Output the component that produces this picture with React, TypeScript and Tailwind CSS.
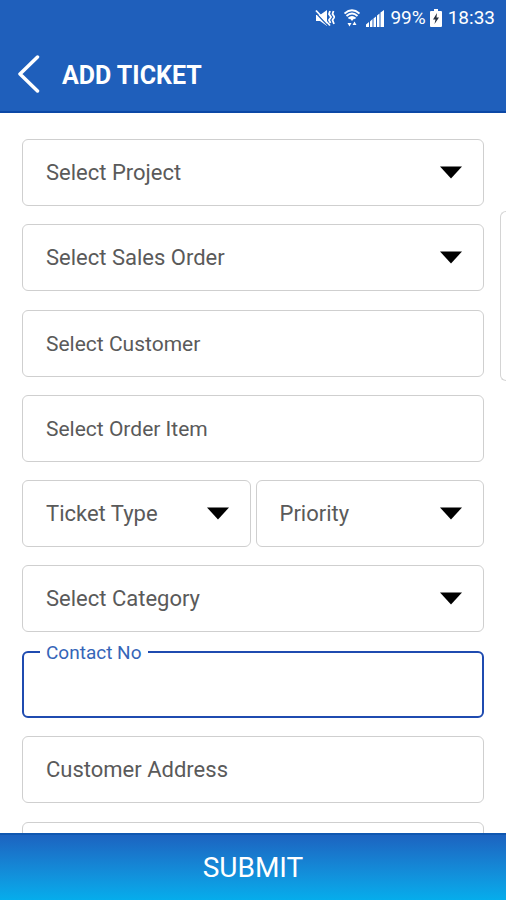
import { useState } from "react";

const fieldBox =
  "h-[67px] w-full rounded-md border border-[#cfcfcf] bg-white pl-[23px] leading-7 text-[#5a5a5a] outline-none";

function SelectField({ label }: { label: string }) {
  return (
    <div className="relative min-w-0 flex-1">
      <select aria-label={label} className={`${fieldBox} block appearance-none pr-14 text-[22px]`} defaultValue="">
        <option value="">{label}</option>
      </select>
      <svg
        viewBox="0 0 22 13"
        className="pointer-events-none absolute top-[27px] right-[22px] h-[13px] w-[22px]"
        aria-hidden="true"
      >
        <path d="M0 0.5H22L11 12.5Z" fill="#000" />
      </svg>
    </div>
  );
}

function TextField({ label, size = "text-[22px]" }: { label: string; size?: string }) {
  return (
    <input
      type="text"
      aria-label={label}
      placeholder={label}
      className={`${fieldBox} ${size} block pr-5 placeholder:text-[#5a5a5a] placeholder:opacity-100`}
    />
  );
}

function StatusBar() {
  return (
    <div className="flex h-9 items-center justify-end pr-[11px] text-[19px] leading-6 text-white">
      <svg viewBox="0 0 20 18" className="mr-[9px] h-[18px] w-5" aria-hidden="true">
        <path d="M1 6H5L12 1V17L5 12H1Z" fill="#fff" />
        <path d="M0 3L14 18" stroke="#1f5fbb" strokeWidth="1.2" />
        <path d="M1 1.500L15 16.500" stroke="#fff" strokeWidth="1.800" />
        <path d="M15 2L14 5L16 8L14 11L15.500 14M18.500 2L17.500 5L19.500 8L17.500 11L19 15" stroke="#fff" strokeWidth="1.800" fill="none" />
      </svg>
      <svg viewBox="0 0 16 18" className="mr-[6px] h-[18px] w-4" fill="none" stroke="#fff" strokeWidth="1.900" aria-hidden="true">
        <path d="M0.500 4.500Q8 -2 15.500 4.500M2.500 7Q8 2 13.500 7M4.500 9.500Q8 6.500 11.500 9.500" />
        <path d="M5.500 9L8 12L10.500 9Z" fill="#fff" stroke="none" />
        <path d="M3.500 14H7.500L5.500 17.500ZM8.500 16L10.500 12.500L12.500 16Z" fill="#fff" stroke="none" />
      </svg>
      <svg viewBox="0 0 18 17" className="mr-[6px] h-[17px] w-[18px]" fill="#fff" aria-hidden="true">
        <path d="M0 17V14.500L3 12V17ZM4 17V11.500L6.500 9V17ZM7.500 17V8.500L10 6.500V17ZM11 17V5.500L13.500 3.500V17ZM14.500 17V2.500L18 0V17Z" />
      </svg>
      <span>99%</span>
      <svg viewBox="0 0 12 18" className="mr-[6px] ml-1 h-[18px] w-3" aria-hidden="true">
        <path d="M4 0H8V2H11Q12 2 12 3V17Q12 18 11 18H1Q0 18 0 17V3Q0 2 1 2H4Z" fill="#fff" />
        <path d="M7 4L3 10.500H5.500L4.500 15L9 8.500H6.500Z" fill="#26303f" />
      </svg>
      <span>18:33</span>
    </div>
  );
}

export default function App() {
  const [contact, setContact] = useState("");

  return (
    <div className="relative flex h-screen flex-col overflow-hidden bg-white font-['Roboto',sans-serif]">
      <header className="shrink-0 border-b-2 border-[#0c48a6] bg-[#1f5fbb]">
        <StatusBar />
        <div className="flex h-[75px] items-center pl-[18px] text-white">
          <button type="button" aria-label="Back" className="mr-[22px]">
            <svg viewBox="0 0 22 38" className="block h-[38px] w-[22px]" aria-hidden="true">
              <path d="M19.500 2L2 19L19.500 36" fill="none" stroke="#fff" strokeWidth="3.500" strokeLinecap="round" strokeLinejoin="round" />
            </svg>
          </button>
          <h1 className="pt-1 text-[25px] leading-8 font-bold">ADD TICKET</h1>
        </div>
      </header>

      <main className="min-h-0 flex-1 overflow-y-auto pt-[26px] [scrollbar-width:none]">
        <form id="ticket" className="flex flex-col gap-[19px] px-[22px]" onSubmit={(e) => e.preventDefault()}>
          <div className="flex flex-col gap-[18px]">
            <SelectField label="Select Project" />
            <SelectField label="Select Sales Order" />
          </div>

          <div className="flex flex-col gap-[18px]">
            <TextField label="Select Customer" size="text-[21px]" />
            <TextField label="Select Order Item" size="text-[21px]" />
            <div className="flex gap-[5px]">
              <SelectField label="Ticket Type" />
              <SelectField label="Priority" />
            </div>
            <SelectField label="Select Category" />
          </div>

          <div className="flex flex-col gap-[18px]">
            <div className="relative">
              <input
                id="contact"
                type="tel"
                value={contact}
                onChange={(e) => setContact(e.target.value)}
                className="block h-[67px] w-full rounded-md border-2 border-[#1f4bb0] bg-white px-5 text-[22px] text-[#5a5a5a] outline-none"
              />
              <label
                htmlFor="contact"
                className="absolute -top-2 left-[18px] bg-white px-[6px] text-[19px] leading-5 text-[#3565b8]"
              >
                Contact No
              </label>
            </div>
            <TextField label="Customer Address" />
          </div>

          <input type="text" aria-label="Remarks" className={`${fieldBox} block pr-5 text-[22px]`} />
        </form>
      </main>

      <div className="absolute top-[211px] right-0 h-[170px] w-[6px] rounded-l-md border border-r-0 border-[#d4d4d4] bg-white" />

      <button
        type="submit"
        form="ticket"
        className="h-[67px] shrink-0 border-t-2 border-[#0f57b0] bg-linear-to-b from-[#1c63c0] to-[#05adec] text-[28px] leading-8 text-white"
      >
        SUBMIT
      </button>
    </div>
  );
}
